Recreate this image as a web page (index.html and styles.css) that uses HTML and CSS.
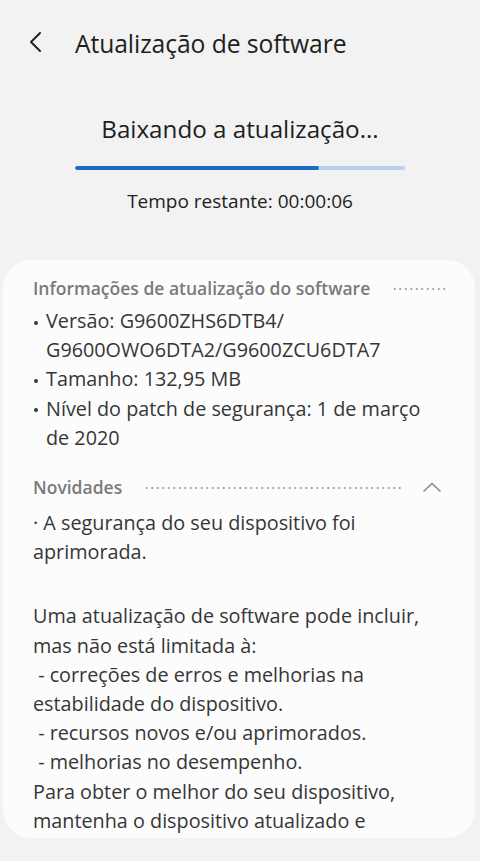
FILE: index.html
```html
<!DOCTYPE html>
<html lang="pt">
<head>
<meta charset="utf-8">
<link rel="stylesheet" href="styles.css">
</head>
<body>
<div class="screen">
  <header class="appbar">
    <svg class="back" width="16" height="22" viewBox="0 0 16 22"><path d="M12 2 L3 11 L12 20" fill="none" stroke="#222" stroke-width="2" stroke-linecap="round" stroke-linejoin="round"/></svg>
    <h1 class="title">Atualização de software</h1>
  </header>
  <section class="status">
    <div class="status-title">Baixando a atualização...</div>
    <div class="progress"><div class="progress-fill" style="width:74%"></div></div>
    <div class="remaining">Tempo restante: 00:00:06</div>
  </section>
  <section class="card">
    <div class="sec-head">
      <span class="sec-label">Informações de atualização do software</span>
      <span class="dots"></span>
    </div>
    <ul class="info">
      <li>Versão: G9600ZHS6DTB4/ G9600OWO6DTA2/G9600ZCU6DTA7</li>
      <li>Tamanho: 132,95 MB</li>
      <li>Nível do patch de segurança: 1 de março de 2020</li>
    </ul>
    <div class="sec-head news">
      <span class="sec-label">Novidades</span>
      <span class="dots"></span>
      <svg class="chev" width="18" height="10" viewBox="0 0 18 10"><path d="M1 9 L9 1.5 L17 9" fill="none" stroke="#8a8a8a" stroke-width="1.6" stroke-linecap="round" stroke-linejoin="round"/></svg>
    </div>
    <div class="body-text">
      <p>· A segurança do seu dispositivo foi aprimorada.</p>
      <p class="gap">Uma atualização de software pode incluir, mas não está limitada à:<br>
      &nbsp;- correções de erros e melhorias na estabilidade do dispositivo.<br>
      &nbsp;- recursos novos e/ou aprimorados.<br>
      &nbsp;- melhorias no desempenho.<br>
      Para obter o melhor do seu dispositivo, mantenha o dispositivo atualizado e verifique regularmente se há atualizações de software.</p>
    </div>
  </section>
</div>
</body>
</html>
```
FILE: styles.css
```css
* { box-sizing: border-box; }
html, body { margin: 0; padding: 0; }
body {
  background: #f2f2f2;
  font-family: "Open Sans", Roboto, sans-serif;
  color: #252525;
  width: 480px;
  height: 861px;
  overflow: hidden;
}
.screen { display: flex; flex-direction: column; }
.appbar {
  display: flex;
  align-items: center;
  height: 86px;
  padding: 0 0 0 28px;
}
.back { flex: none; margin-right: 31px; margin-top: -2px; }
.title {
  margin: 0;
  font-size: 24.7px;
  font-weight: 400;
  color: #1e1e1e;
  letter-spacing: -0.1px;
}
.status {
  display: flex;
  flex-direction: column;
  align-items: center;
  padding-top: 27px;
}
.status-title {
  font-size: 24.2px;
  color: #1e1e1e;
  line-height: 32px;
}
.progress {
  width: 330px;
  height: 4px;
  background: #b9d2ea;
  border-radius: 2px;
  margin-top: 21px;
  overflow: hidden;
}
.progress-fill { height: 100%; background: #1a6dbf; border-radius: 2px; }
.remaining {
  font-size: 19px;
  margin-top: 18px;
  color: #1e1e1e;
}
.card {
  margin: 46px 5px 0 3px;
  height: 578px;
  background: #fcfcfc;
  border-radius: 28px;
  overflow: hidden;
  padding: 14px 28px 0 30px;
}
.sec-head {
  display: flex;
  align-items: center;
  height: 28px;
}
.sec-label {
  font-size: 17.5px;
  font-weight: 600;
  color: #7a7a7a;
  white-space: nowrap;
}
.dots {
  flex: 1;
  height: 4px;
  margin-left: 22px;
  margin-top: 2px;
  background-image: radial-gradient(circle, #a6a6a6 0.9px, transparent 1.3px);
  background-size: 5.5px 4px;
  background-repeat: repeat-x;
}
.info {
  list-style: none;
  margin: 4px 0 0;
  padding: 0;
  font-size: 19.8px;
  line-height: 29.2px;
  color: #363636;
}
.info li { position: relative; padding-left: 13px; padding-right: 6px; }
.info li::before {
  content: "";
  position: absolute;
  left: 1px;
  top: 14.5px;
  width: 4px;
  height: 4px;
  border-radius: 50%;
  background: #363636;
}
.news { margin-top: 21px; }
.news .dots { margin-right: 20px; }
.chev { flex: none; margin-right: 6px; }
.body-text {
  font-size: 19.8px;
  line-height: 29.2px;
  color: #363636;
  padding-right: 8px;
}
.body-text p { margin: 7px 0 0; }
.body-text p.gap { margin-top: 35px; }
```
